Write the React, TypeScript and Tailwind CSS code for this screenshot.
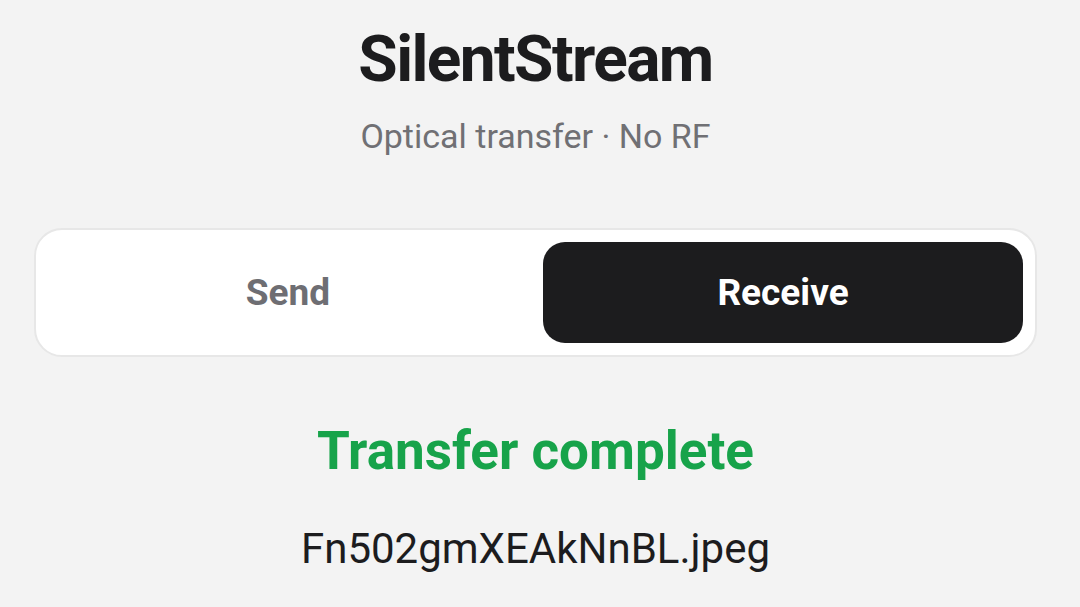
import { useState } from "react";

export default function App() {
  const [mode, setMode] = useState<"send" | "receive">("receive");

  return (
    <div className="min-h-screen w-full bg-[#f3f3f3] font-['Roboto',sans-serif] text-[#1c1c1e] pl-[34px] pr-[43px] pt-[24px]">
      {/* Header */}
      <div className="flex flex-col items-center">
        <h1 className="text-[64px] font-bold leading-[72px] tracking-[-1.6px]">SilentStream</h1>
        <p className="mt-[20px] text-[34px] leading-[40px] text-[#707074]">Optical transfer · No RF</p>
      </div>

      {/* Mode switch */}
      <div className="mt-[72px] flex h-[129px] gap-[15px] rounded-[28px] border-2 border-[#e7e7e7] bg-white p-[12px]">
        <button
          onClick={() => setMode("send")}
          className={
            mode === "send"
              ? "flex-1 rounded-[22px] bg-[#1c1c1e] text-[37px] font-bold text-white"
              : "flex-1 rounded-[22px] text-[37px] font-bold text-[#6e6e73]"
          }
        >
          Send
        </button>
        <button
          onClick={() => setMode("receive")}
          className={
            mode === "receive"
              ? "flex-1 rounded-[22px] bg-[#1c1c1e] text-[37px] font-bold text-white"
              : "flex-1 rounded-[22px] text-[37px] font-bold text-[#6e6e73]"
          }
        >
          Receive
        </button>
      </div>

      {/* Status */}
      <div className="mt-[62px] flex flex-col items-center">
        <div className="text-[53px] font-bold leading-[64px] text-[#17a34a]">Transfer complete</div>
        <div className="mt-[40px] text-[42px] leading-[52px]">Fn502gmXEAkNnBL.jpeg</div>
      </div>
    </div>
  );
}
